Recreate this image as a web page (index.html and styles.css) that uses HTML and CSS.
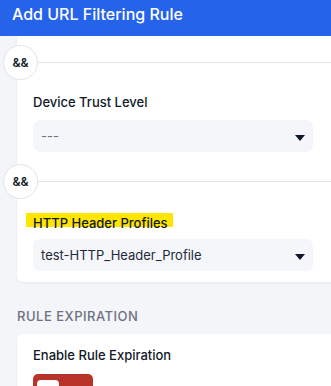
FILE: index.html
```html
<!DOCTYPE html>
<html lang="en">
<head>
    <meta charset="UTF-8">
    <meta name="viewport" content="width=device-width, initial-scale=1.0">
    <title>Add URL Filtering Rule</title>
    <link rel="stylesheet" href="styles.css">
</head>
<body>
    <div class="topbar">
        <h1 class="title">Add URL Filtering Rule</h1>
    </div>

    <div class="page">
        <div class="card conditions">
            <div class="joiner">
                <span class="joiner-badge">&amp;&amp;</span>
                <span class="joiner-line"></span>
            </div>
            <div class="field">
                <label class="field-label">Device Trust Level</label>
                <div class="select">
                    <span class="select-value placeholder">---</span>
                    <span class="caret"></span>
                </div>
            </div>

            <div class="joiner">
                <span class="joiner-badge">&amp;&amp;</span>
                <span class="joiner-line"></span>
            </div>
            <div class="field">
                <label class="field-label"><span class="mark">HTTP Header Profiles</span></label>
                <div class="select">
                    <span class="select-value">test-HTTP_Header_Profile</span>
                    <span class="caret"></span>
                </div>
            </div>
        </div>

        <h2 class="section-title">RULE EXPIRATION</h2>

        <div class="card expiry">
            <div class="field">
                <label class="field-label">Enable Rule Expiration</label>
                <div class="toggle"><span class="knob"></span></div>
            </div>
        </div>
    </div>
</body>
</html>
```

FILE: styles.css
```css
*{
    padding: 0;
    margin: 0;
    box-sizing: border-box;
}

html, body{
    height: 100%;
    overflow: hidden;
}

body{
    background: #f4f5f8;
    font-family: Inter, "Noto Sans", sans-serif;
    color: #111827;
}

.topbar{
    height: 36px;
    background: #2563eb;
    padding: 4px 0 0 12px;
}

.title{
    color: #fff;
    font-size: 16px;
    font-weight: 500;
    line-height: 20px;
}

.page{
    padding-left: 17px;
    margin-right: -12px;
}

.card{
    background: #fff;
    border-radius: 6px;
    box-shadow: 0 1px 3px rgba(15, 23, 42, .06);
}

.conditions{
    border-top-left-radius: 0;
    border-top-right-radius: 0;
    padding: 9px 0 11px 0;
}

.joiner{
    display: flex;
    align-items: center;
    margin-left: -14px;
}

.joiner-badge{
    width: 35px;
    height: 35px;
    flex: none;
    border: 1px solid #dfe4ea;
    border-radius: 50%;
    background: #fff;
    display: flex;
    align-items: center;
    justify-content: center;
    font-size: 12px;
    font-weight: 600;
    color: #111827;
}

.joiner-line{
    flex: 1;
    height: 1px;
    background: #dfe4ea;
}

.field{
    padding: 12px 30px 0 16px;
}

.field + .joiner{
    margin-top: 12px;
}

.field-label{
    display: block;
    font-size: 13px;
    font-weight: 500;
    line-height: 20px;
    color: #111827;
}

.mark{
    display: inline-block;
    height: 14px;
    line-height: 20px;
    margin-top: 2px;
    padding: 0 5px 0 7px;
    margin-left: -7px;
    background: #ffe600;
    vertical-align: top;
}

.select{
    margin-top: 8px;
    height: 32px;
    width: 280px;
    background: #f4f6f9;
    border-radius: 7px;
    display: flex;
    align-items: center;
    justify-content: space-between;
    padding: 0 8px;
}

.select-value{
    font-size: 13px;
    line-height: 20px;
    color: #1e293b;
}

.select-value.placeholder{
    color: #6b7280;
}

.caret{
    width: 0;
    height: 0;
    border-left: 5px solid transparent;
    border-right: 5px solid transparent;
    border-top: 6px solid #0f172a;
    margin-top: 3px;
}

.section-title{
    margin-top: 24px;
    font-size: 13px;
    font-weight: 500;
    line-height: 20px;
    letter-spacing: .5px;
    color: #6b7280;
}

.expiry{
    margin-top: 8px;
    padding-bottom: 20px;
}

.expiry .field{
    padding-top: 11px;
}

.toggle{
    margin-top: 9px;
    width: 60px;
    height: 28px;
    background: #b8342a;
    border-radius: 5px;
    padding: 6px 4px;
}

.knob{
    display: block;
    width: 22px;
    height: 16px;
    background: #fff;
    border-radius: 4px;
}
```
